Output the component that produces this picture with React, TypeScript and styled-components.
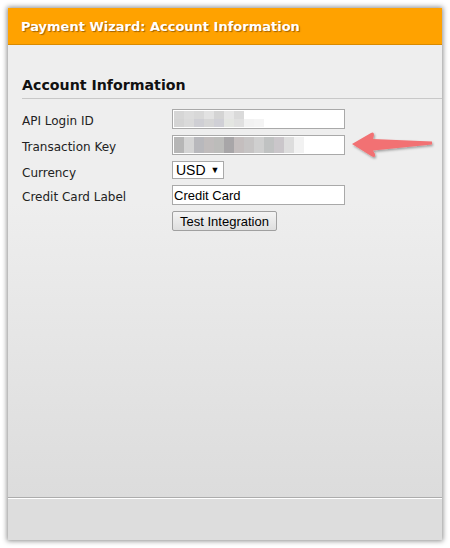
import React from "react";
import styled, { createGlobalStyle } from "styled-components";

const Global = createGlobalStyle`
  html, body { margin: 0; padding: 0; background: #ffffff; }
  body { font-family: "DejaVu Sans", Verdana, sans-serif; }
`;

const Panel = styled.div`
  position: relative;
  margin: 8px;
  width: 434px;
  height: 532px;
  display: flex;
  flex-direction: column;
  background: #eeeeee;
  box-shadow: 0 0 5px 1px rgba(0, 0, 0, 0.45);
  box-sizing: border-box;
`;

const Header = styled.div`
  height: 36px;
  flex: 0 0 auto;
  background: #ffa200;
  border-bottom: 1px solid #d98a00;
  display: flex;
  align-items: center;
  padding-left: 13px;
  color: #ffffff;
  font-family: "DejaVu Sans", Verdana, sans-serif;
  font-weight: bold;
  font-size: 13px;
  text-shadow: 1px 1px 1px rgba(120, 70, 0, 0.7);
`;

const Body = styled.div`
  flex: 1 1 auto;
  background: linear-gradient(#eeeeee 0%, #eeeeee 35%, #dcdcdc 100%);
  padding: 32px 0 0 14px;
`;

const Heading = styled.h2`
  margin: 0;
  padding-bottom: 4px;
  border-bottom: 1px solid #c8c8c8;
  font-family: "DejaVu Sans", Verdana, sans-serif;
  font-weight: bold;
  font-size: 14.2px;
  line-height: 17px;
  color: #111111;
`;

const Form = styled.div`
  display: grid;
  grid-template-columns: 150px 1fr;
  grid-template-rows: 20px 20px 18px 20px 20px;
  row-gap: 6px;
  margin-top: 10px;
`;

const Label = styled.div`
  font-family: "DejaVu Sans", Verdana, sans-serif;
  font-size: 12px;
  line-height: 14px;
  color: #222222;
  padding-top: 5px;
  white-space: nowrap;
`;

const TextBox = styled.div`
  width: 173px;
  height: 20px;
  box-sizing: border-box;
  border: 1px solid #a9a9a9;
  background: #ffffff;
  font-family: "Liberation Sans", Arial, sans-serif;
  font-size: 13px;
  color: #000000;
  display: flex;
  align-items: center;
  padding-left: 1px;
  overflow: hidden;
`;

const Blur = styled.div`
  display: flex;
  flex-direction: column;
  filter: blur(0.6px);
`;

const BlurRow = styled.div`
  display: flex;
  height: 8px;
`;

const Pix = styled.span<{ $c: string; $w?: number }>`
  width: ${(p) => p.$w ?? 10}px;
  height: 8px;
  background: ${(p) => p.$c};
`;

const Select = styled.div`
  width: 52px;
  height: 18px;
  box-sizing: border-box;
  border: 1px solid #a9a9a9;
  background: #ffffff;
  font-family: "Liberation Sans", Arial, sans-serif;
  font-size: 14px;
  color: #000;
  display: flex;
  align-items: center;
  padding-left: 3px;
  gap: 5px;
`;

const Caret = styled.span`
  font-size: 9px;
`;

const Button = styled.div`
  width: 105px;
  height: 20px;
  box-sizing: border-box;
  border: 1px solid #a0a0a0;
  border-radius: 2px;
  background: linear-gradient(#f4f4f4, #dedede);
  font-family: "Liberation Sans", Arial, sans-serif;
  font-size: 13px;
  color: #000;
  display: flex;
  align-items: center;
  justify-content: center;
`;

const Footer = styled.div`
  flex: 0 0 42px;
  background: #dddddd;
  border-top: 1px solid #acacac;
  box-shadow: inset 0 1px 0 #ffffff;
`;

const Arrow = styled.svg`
  position: absolute;
  left: 340px;
  top: 118px;
  overflow: visible;
`;

const row1a = ["#d6d6d6", "#dcdcdc", "#d8d8d8", "#e2e2e2", "#d4d4d4", "#e6e6e6", "#dadada"];
const row1b = ["#d4d4d4", "#dadada", "#cfcfd4", "#d6d6d6", "#d0d0d6", "#e4e6e2", "#e0e0e0", "#f2f2f2", "#f4f4f4"];
const row2a = ["#b6b6b6", "#d4d4d4", "#b8b8bc", "#c0bcbc", "#bcbcba", "#a8a6a8", "#c4bebe", "#c6c4c4", "#cfcfcf", "#c0c2c2", "#cac6ca", "#dddddd", "#f2f2f2"];

export default function App() {
  return (
    <>
      <Global />
      <Panel>
        <Header>Payment Wizard: Account Information</Header>
        <Body>
          <Heading>Account Information</Heading>
          <Form>
            <Label>API Login ID</Label>
            <TextBox>
              <Blur>
                <BlurRow>
                  {row1a.map((c, i) => (
                    <Pix key={i} $c={c} />
                  ))}
                </BlurRow>
                <BlurRow>
                  {row1b.map((c, i) => (
                    <Pix key={i} $c={c} />
                  ))}
                </BlurRow>
              </Blur>
            </TextBox>
            <Label>Transaction Key</Label>
            <TextBox>
              <Blur>
                <BlurRow>
                  {row2a.map((c, i) => (
                    <Pix key={i} $c={c} />
                  ))}
                </BlurRow>
                <BlurRow>
                  {row2a.map((c, i) => (
                    <Pix key={i} $c={c} />
                  ))}
                </BlurRow>
              </Blur>
            </TextBox>
            <Label>Currency</Label>
            <Select>
              USD <Caret>▼</Caret>
            </Select>
            <Label>Credit Card Label</Label>
            <TextBox>Credit Card</TextBox>
            <span />
            <Button>Test Integration</Button>
          </Form>
        </Body>
        <Footer />
        <Arrow width="90" height="36" viewBox="0 0 90 36">
          <defs>
            <filter id="sh" x="-20%" y="-40%" width="140%" height="180%">
              <feDropShadow dx="1" dy="1.5" stdDeviation="1" floodColor="#000" floodOpacity="0.35" />
            </filter>
          </defs>
          <path
            d="M4 18 L23 7 Q26 5.5 26 9 L25 13 L84 15.5 L84 18.5 L25 24.5 L27 28 Q28 32 24 30.5 Z"
            fill="#f27173"
            filter="url(#sh)"
          />
        </Arrow>
      </Panel>
    </>
  );
}
